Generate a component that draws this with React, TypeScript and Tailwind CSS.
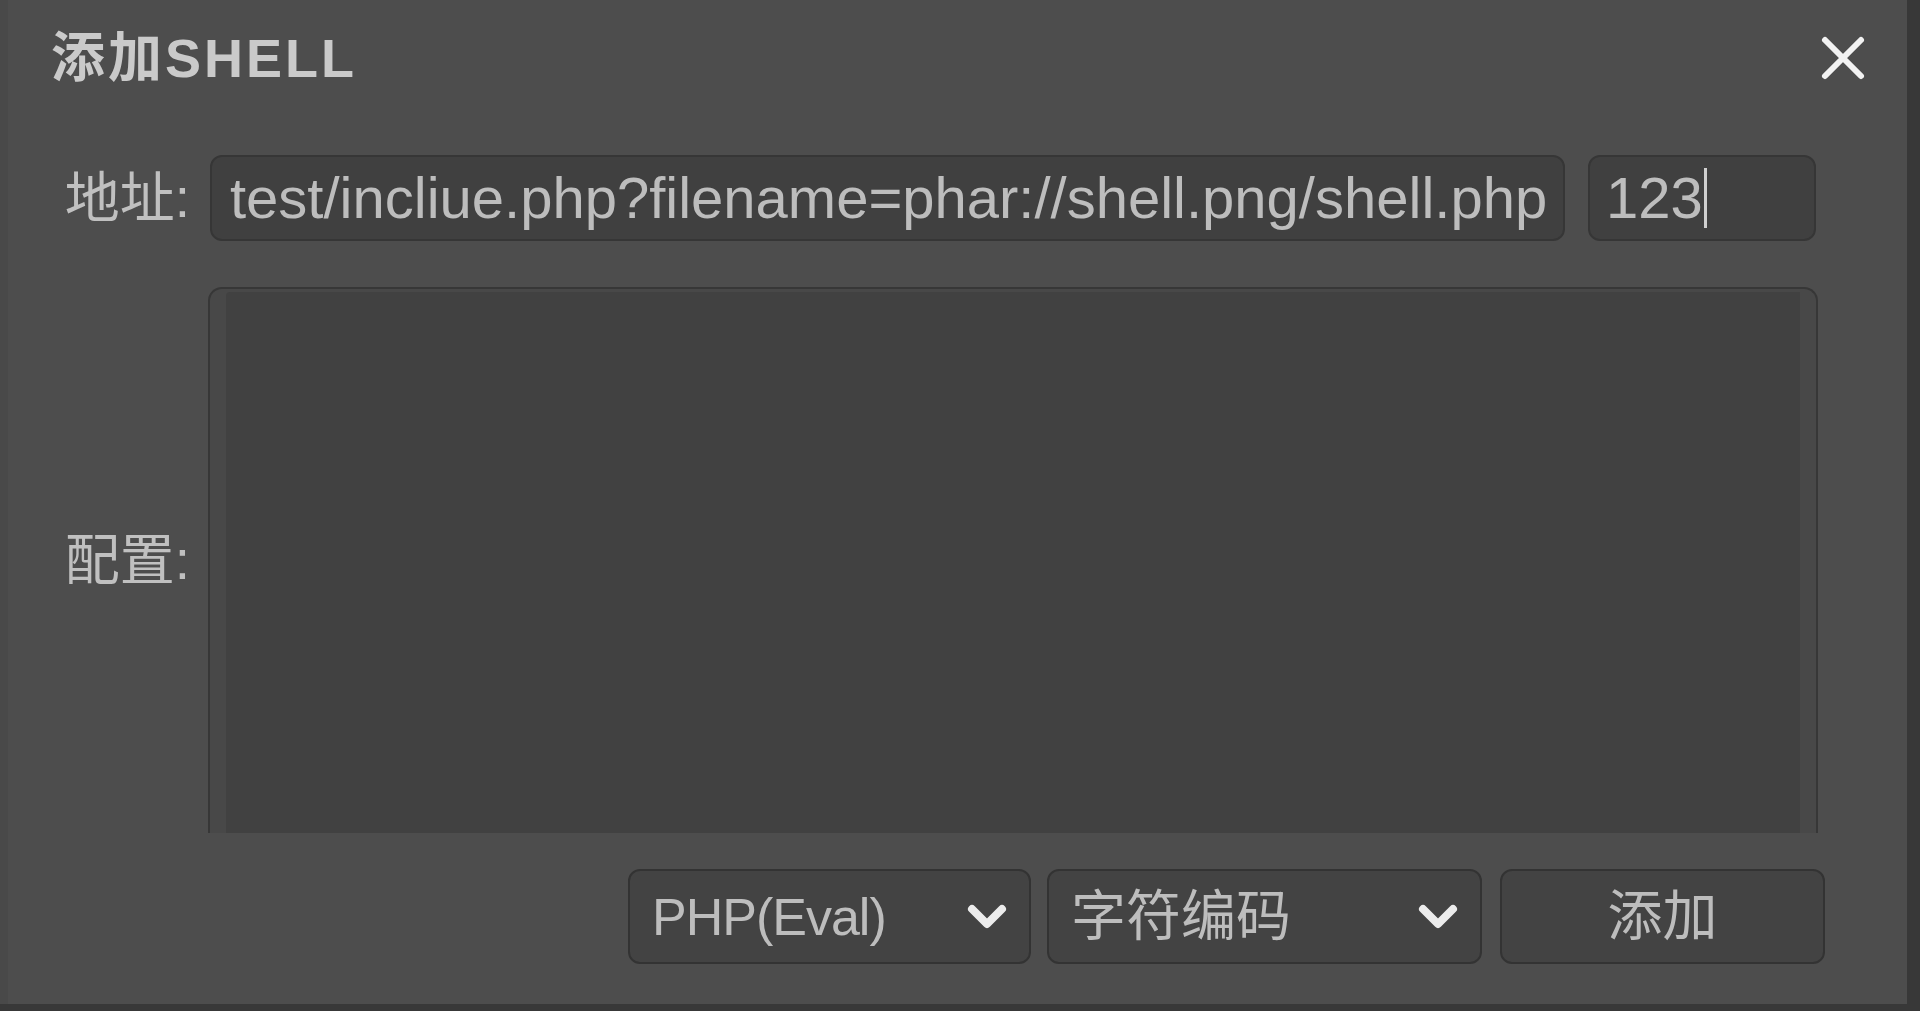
const sans = "font-['Liberation_Sans','Noto_Sans_CJK_SC',sans-serif]"

function Chevron() {
  return (
    <svg width="40" height="28" viewBox="0 0 40 28" fill="none">
      <path d="M5 6 L20 21 L35 6" stroke="#ececec" strokeWidth="8" strokeLinecap="round" strokeLinejoin="round" />
    </svg>
  )
}

function CloseIcon() {
  return (
    <svg width="46" height="46" viewBox="0 0 46 46" fill="none">
      <path d="M5 5 L41 41 M41 5 L5 41" stroke="#f2f2f2" strokeWidth="6" strokeLinecap="round" />
    </svg>
  )
}

export default function App() {
  return (
    <div className={`w-[1920px] h-[1011px] bg-[#383838] overflow-hidden ${sans}`}>
      <div className="w-[1907px] h-[1004px] bg-[#4d4d4d] border-l-[8px] border-[#494949] flex flex-col">
        {/* header */}
        <div className="h-[116px] flex items-center justify-between pl-[43px] pr-[41px]">
          <span className="text-[54px] font-bold tracking-[3px] text-[#cacaca] leading-none">添加SHELL</span>
          <CloseIcon />
        </div>

        {/* address row */}
        <div className="mt-[39px] h-[86px] flex items-center">
          <div className="w-[182px] text-right text-[55px] text-[#c0c0c0] leading-none">地址:</div>
          <div className="ml-[20px] w-[1355px] h-full rounded-[12px] border-2 border-[#363636] bg-[#404040] flex items-center pl-[18px] overflow-hidden">
            <span className="text-[58px] text-[#bdbdbd] leading-none whitespace-nowrap">
              test/incliue.php?filename=phar://shell.png/shell.php
            </span>
          </div>
          <div className="ml-[23px] w-[228px] h-full rounded-[12px] border-2 border-[#363636] bg-[#404040] flex items-center pl-[16px]">
            <span className="text-[58px] text-[#bdbdbd] leading-none">123</span>
            <span className="w-[3px] h-[60px] bg-[#d0d0d0] ml-[1px]" />
          </div>
        </div>

        {/* config row */}
        <div className="mt-[46px] h-[546px] flex items-center">
          <div className="w-[182px] text-right text-[55px] text-[#c0c0c0] leading-none">配置:</div>
          <div className="ml-[18px] w-[1610px] h-full rounded-t-[14px] border-2 border-b-0 border-[#373737] bg-[#484848] pl-[16px] pr-[16px] pt-[3px] overflow-hidden">
            <div className="h-full bg-[#414141] rounded-tl-[4px]" />
          </div>
        </div>

        {/* bottom row */}
        <div className="mt-[36px] h-[95px] flex pl-[620px]">
          <div className="w-[403px] h-full rounded-[12px] border-2 border-[#333333] bg-[#434343] flex items-center justify-between pl-[22px] pr-[22px]">
            <span className="text-[52px] text-[#bdbdbd] leading-none tracking-[-1px]">PHP(Eval)</span>
            <Chevron />
          </div>
          <div className="ml-[16px] w-[435px] h-full rounded-[12px] border-2 border-[#333333] bg-[#434343] flex items-center justify-between pl-[22px] pr-[22px]">
            <span className="text-[55px] text-[#bdbdbd] leading-none">字符编码</span>
            <Chevron />
          </div>
          <div className="ml-[18px] w-[325px] h-full rounded-[12px] border-2 border-[#333333] bg-[#434343] flex items-center justify-center">
            <span className="text-[55px] text-[#bdbdbd] leading-none">添加</span>
          </div>
        </div>
      </div>
    </div>
  )
}
